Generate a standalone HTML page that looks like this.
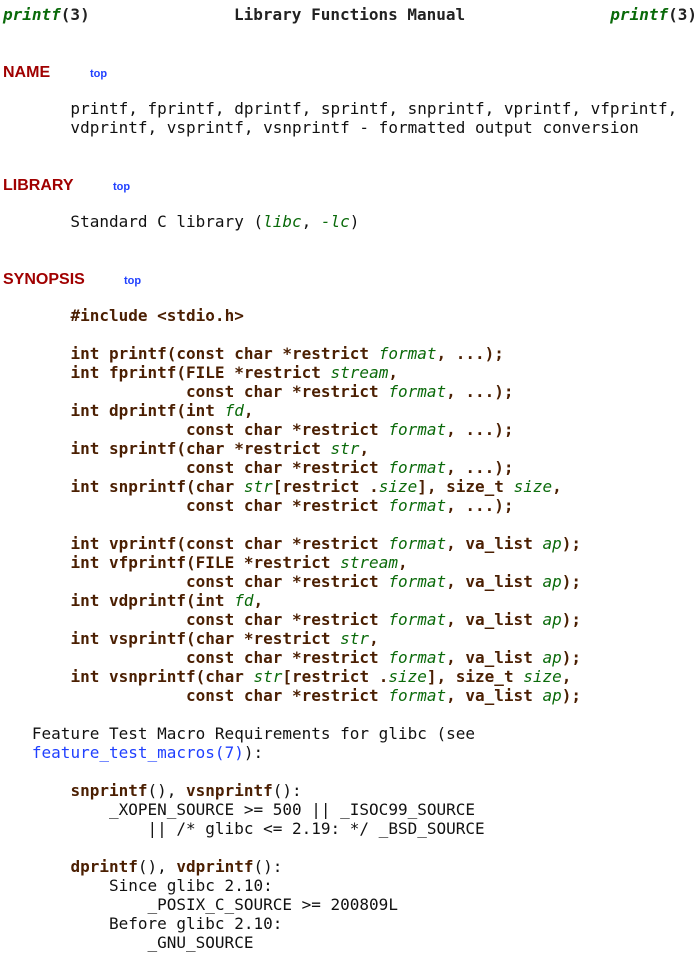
<!DOCTYPE html>
<html><head><meta charset="utf-8"><style>
html,body{margin:0;padding:0;background:#fff;width:699px;height:961px;overflow:hidden;position:relative}
pre{margin:0;position:absolute;left:3px;font-family:"DejaVu Sans Mono","Liberation Mono",monospace;font-size:16px;line-height:19px;color:#111}
b{color:#4b1f02}
i{color:#0a6a0a}
a{color:#2040ff;text-decoration:none}
.h{position:absolute;left:3px;font-family:"Liberation Sans",sans-serif;font-weight:bold;font-size:16px;color:#a00000;line-height:19px}
.t{position:absolute;font-family:"Liberation Sans",sans-serif;font-weight:bold;font-size:11px;color:#2040ff;line-height:13px}
.hd{position:absolute;top:4.5px;font-family:"DejaVu Sans Mono",monospace;font-size:16px;font-weight:bold;line-height:19px;color:#222}
.hd i{color:#0a6a0a}
</style></head><body>
<div class="hd" style="left:3px"><i>printf</i>(3)</div>
<div class="hd" style="left:234px">Library Functions Manual</div>
<div class="hd" style="right:2px"><i>printf</i>(3)</div>

<div class="h" style="top:63px">NAME</div><div class="t" style="left:90px;top:68px">top</div>
<pre style="top:98.5px">       printf, fprintf, dprintf, sprintf, snprintf, vprintf, vfprintf,
       vdprintf, vsprintf, vsnprintf - formatted output conversion</pre>

<div class="h" style="top:176px">LIBRARY</div><div class="t" style="left:113px;top:181px">top</div>
<pre style="top:211.5px">       Standard C library (<i>libc</i>, <i>-lc</i>)</pre>

<div class="h" style="top:270px">SYNOPSIS</div><div class="t" style="left:124px;top:275px">top</div>
<pre style="top:305.5px">       <b>#include &lt;stdio.h&gt;</b>

       <b>int printf(const char *restrict </b><i>format</i><b>, ...);</b>
       <b>int fprintf(FILE *restrict </b><i>stream</i><b>,</b>
       <b>            const char *restrict </b><i>format</i><b>, ...);</b>
       <b>int dprintf(int </b><i>fd</i><b>,</b>
       <b>            const char *restrict </b><i>format</i><b>, ...);</b>
       <b>int sprintf(char *restrict </b><i>str</i><b>,</b>
       <b>            const char *restrict </b><i>format</i><b>, ...);</b>
       <b>int snprintf(char </b><i>str</i><b>[restrict .</b><i>size</i><b>], size_t </b><i>size</i><b>,</b>
       <b>            const char *restrict </b><i>format</i><b>, ...);</b>

       <b>int vprintf(const char *restrict </b><i>format</i><b>, va_list </b><i>ap</i><b>);</b>
       <b>int vfprintf(FILE *restrict </b><i>stream</i><b>,</b>
       <b>            const char *restrict </b><i>format</i><b>, va_list </b><i>ap</i><b>);</b>
       <b>int vdprintf(int </b><i>fd</i><b>,</b>
       <b>            const char *restrict </b><i>format</i><b>, va_list </b><i>ap</i><b>);</b>
       <b>int vsprintf(char *restrict </b><i>str</i><b>,</b>
       <b>            const char *restrict </b><i>format</i><b>, va_list </b><i>ap</i><b>);</b>
       <b>int vsnprintf(char </b><i>str</i><b>[restrict .</b><i>size</i><b>], size_t </b><i>size</i><b>,</b>
       <b>            const char *restrict </b><i>format</i><b>, va_list </b><i>ap</i><b>);</b>

   Feature Test Macro Requirements for glibc (see
   <a>feature_test_macros(7)</a>):

       <b>snprintf</b>(), <b>vsnprintf</b>():
           _XOPEN_SOURCE &gt;= 500 || _ISOC99_SOURCE
               || /* glibc &lt;= 2.19: */ _BSD_SOURCE

       <b>dprintf</b>(), <b>vdprintf</b>():
           Since glibc 2.10:
               _POSIX_C_SOURCE &gt;= 200809L
           Before glibc 2.10:
               _GNU_SOURCE</pre>
</body></html>
